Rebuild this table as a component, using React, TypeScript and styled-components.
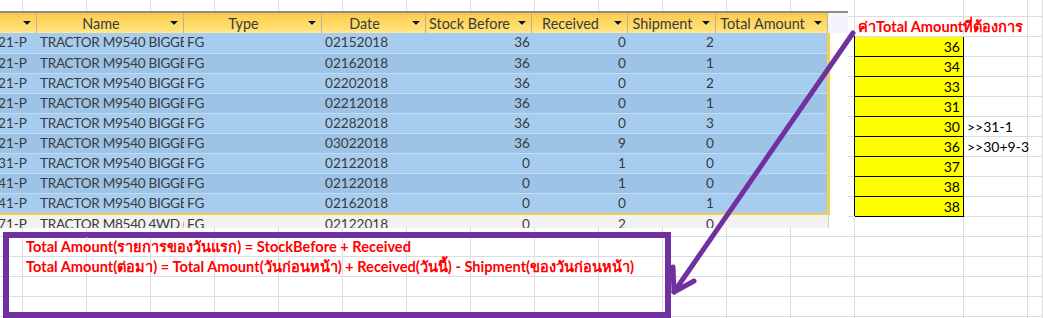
import React from 'react';
import styled, { createGlobalStyle } from 'styled-components';

const GlobalStyle = createGlobalStyle`
  html, body {
    margin: 0;
    padding: 0;
    background: #ffffff;
  }
  body {
    font-family: Lato, "Liberation Sans", "Noto Sans", sans-serif;
  }
`;

const ROWS = 17;
const COLS = 17;
const YELLOW_VALUES = [36, 34, 33, 31, 30, 36, 37, 38, 38];

const TABLE_ROWS = [
  { id: '21-P', date: '02152018', before: 36, received: 0, shipment: 2 },
  { id: '21-P', date: '02162018', before: 36, received: 0, shipment: 1 },
  { id: '21-P', date: '02202018', before: 36, received: 0, shipment: 2 },
  { id: '21-P', date: '02212018', before: 36, received: 0, shipment: 1 },
  { id: '21-P', date: '02282018', before: 36, received: 0, shipment: 3 },
  { id: '21-P', date: '03022018', before: 36, received: 9, shipment: 0 },
  { id: '31-P', date: '02122018', before: 0, received: 1, shipment: 0 },
  { id: '41-P', date: '02122018', before: 0, received: 1, shipment: 0 },
  { id: '41-P', date: '02162018', before: 0, received: 0, shipment: 1 },
];

const HEADERS = ['', 'Name', 'Type', 'Date', 'Stock Before', 'Received', 'Shipment', 'Total Amount'];

type CellKind = 'plain' | 'yellow' | 'heading' | 'formula' | 'note';

const sheetCell = (r: number, c: number): { text: string; kind: CellKind } => {
  if (r === 1 && c === 14) return { text: 'ค่าTotal Amountที่ต้องการ', kind: 'heading' };
  if (c === 14 && r >= 2 && r <= 10) return { text: String(YELLOW_VALUES[r - 2]), kind: 'yellow' };
  if (r === 6 && c === 15) return { text: '>>31-1', kind: 'note' };
  if (r === 7 && c === 15) return { text: '>>30+9-3', kind: 'note' };
  if (r === 12 && c === 1)
    return { text: 'Total Amount(รายการของวันแรก) = StockBefore + Received', kind: 'formula' };
  if (r === 13 && c === 1)
    return {
      text: 'Total Amount(ต่อมา) = Total Amount(วันก่อนหน้า) + Received(วันนี้) - Shipment(ของวันก่อนหน้า)',
      kind: 'formula',
    };
  return { text: '', kind: 'plain' };
};

const App = () => {
  const cells = [];
  for (let r = 0; r < ROWS; r++) {
    for (let c = 0; c < COLS; c++) {
      const { text, kind } = sheetCell(r, c);
      cells.push(
        <Cell key={`${r}-${c}`} $kind={kind}>
          {text}
        </Cell>
      );
    }
  }

  return (
    <>
      <GlobalStyle />
      <Page>
        <Sheet>{cells}</Sheet>

        <TableWrap>
          <HeaderRow>
            {HEADERS.map((h, i) => (
              <HeaderCell key={i}>
                <span>{h}</span>
                <DropArrow />
              </HeaderCell>
            ))}
            <HeaderGap />
          </HeaderRow>
          <Body>
            {TABLE_ROWS.map((row, i) => (
              <DataRow key={i} $alt={i % 2 === 1}>
                <IdCell>
                  <span>0000{row.id}</span>
                </IdCell>
                <NameCell>TRACTOR M9540 BIGGER FOOT</NameCell>
                <TextCell>FG</TextCell>
                <TextCell>{row.date}</TextCell>
                <NumCell>{row.before}</NumCell>
                <NumCell>{row.received}</NumCell>
                <NumCell>{row.shipment}</NumCell>
                <TextCell />
              </DataRow>
            ))}
          </Body>
          <GhostRow>
            <IdCell>
              <span>000071-P</span>
            </IdCell>
            <NameCell>TRACTOR M8540 4WD (LFG</NameCell>
            <TextCell>FG</TextCell>
            <TextCell>02122018</TextCell>
            <NumCell>0</NumCell>
            <NumCell>2</NumCell>
            <NumCell>0</NumCell>
            <TextCell />
          </GhostRow>
        </TableWrap>

        <NoteBox />

        <ArrowSvg width="1043" height="318" viewBox="0 0 1043 318">
          <g stroke="#7030a0" strokeWidth="5" strokeLinecap="round" fill="none">
            <line x1="853" y1="33" x2="674" y2="292" />
            <polyline points="673,267 674,292 694,281" strokeLinejoin="round" />
          </g>
        </ArrowSvg>
      </Page>
    </>
  );
};

export default App;

const Page = styled.div`
  position: relative;
  width: 1043px;
  height: 318px;
  overflow: hidden;
  background: #ffffff;
`;

const Sheet = styled.div`
  display: grid;
  grid-template-columns: 23px repeat(13, 64px) 109px 64px 1fr;
  grid-template-rows: 17px repeat(16, 20px);
  width: 1043px;
  font-size: 13.5px;
`;

const Cell = styled.div<{ $kind: CellKind }>`
  box-sizing: border-box;
  border-right: 1px solid #dadcdd;
  border-bottom: 1px solid #dadcdd;
  line-height: 20px;
  padding: 0 3px;
  white-space: nowrap;
  color: #000000;
  position: relative;
  ${({ $kind }) =>
    $kind === 'yellow' &&
    `
    background: #ffff00;
    border-right-color: #000000;
    border-bottom-color: #000000;
    box-shadow: -1px -1px 0 #000000;
    text-align: right;
    font-size: 14px;
  `}
  ${({ $kind }) =>
    ($kind === 'heading' || $kind === 'formula') &&
    `
    color: #ff0000;
    font-size: 14.6px;
    font-weight: 700;
    overflow: visible;
    z-index: 1;
  `}
  ${({ $kind }) => $kind === 'note' && `overflow: visible; z-index: 1; font-size: 14px;`}
`;

const TableWrap = styled.div`
  position: absolute;
  left: 0;
  top: 11px;
  width: 848px;
  height: 215px;
  overflow: hidden;
  background: #ffffff;
  border-top: 2px solid #8c8c8c;
  font-size: 13.6px;
  color: #3b3b3b;
`;

const HeaderRow = styled.div`
  display: grid;
  grid-template-columns: 37px 147px 138px 104px 106px 96px 88px 112px 20px;
  height: 20px;
`;

const HeaderCell = styled.div`
  box-sizing: border-box;
  display: flex;
  align-items: center;
  background: linear-gradient(to bottom, #fcc64a 0%, #ffd55c 35%, #ffdf72 80%, #ffeb94 100%);
  border-right: 1px solid #b9b3a0;
  span {
    flex: 1;
    text-align: center;
    white-space: nowrap;
    font-size: 14.4px;
  }
`;

const DropArrow = styled.i`
  width: 18px;
  height: 20px;
  display: flex;
  align-items: center;
  justify-content: center;
  &::after {
    content: '';
    border-left: 4px solid transparent;
    border-right: 4px solid transparent;
    border-top: 4px solid #111111;
    filter: drop-shadow(0 1px 0 #fff6c8);
  }
`;

const HeaderGap = styled.div`
  background: #f4f4fc;
`;

const Body = styled.div`
  box-sizing: border-box;
  width: 830px;
  border-right: 3px solid #f4cf4b;
  border-bottom: 2px solid #f4cf4b;
`;

const DataRow = styled.div<{ $alt: boolean }>`
  display: grid;
  grid-template-columns: 37px 147px 138px 104px 106px 96px 88px 111px;
  height: 20px;
  box-sizing: border-box;
  background: ${({ $alt }) => ($alt ? '#9dc3e6' : '#a6cdef')};
  border-top: 1px solid #c3daf1;
  &:first-child {
    border-top: none;
  }
`;

const GhostRow = styled.div`
  display: grid;
  grid-template-columns: 37px 147px 138px 104px 106px 96px 88px 112px;
  width: 828px;
  height: 20px;
  background: #f2f2f2;
  border-right: 1px solid #d0d0d0;
`;

const TextCell = styled.div`
  padding: 0 3px;
  line-height: 19px;
  white-space: nowrap;
  overflow: hidden;
  min-width: 0;
`;

const NameCell = styled(TextCell)`
  letter-spacing: -0.3px;
`;

const NumCell = styled(TextCell)`
  text-align: right;
  padding-right: 2px;
`;

const IdCell = styled.div`
  display: flex;
  justify-content: flex-end;
  padding-right: 10px;
  line-height: 19px;
  white-space: nowrap;
  overflow: hidden;
  min-width: 0;
`;

const NoteBox = styled.div`
  position: absolute;
  left: 3px;
  top: 232px;
  width: 668px;
  height: 86px;
  box-sizing: border-box;
  border: 6px solid #7030a0;
`;

const ArrowSvg = styled.svg`
  position: absolute;
  left: 0;
  top: 0;
  pointer-events: none;
`;
